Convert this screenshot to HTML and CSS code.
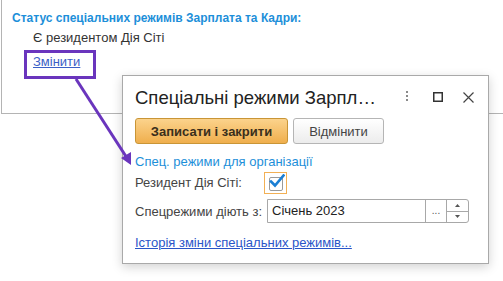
FILE: index.html
```html
<!DOCTYPE html>
<html lang="uk">
<head>
<meta charset="utf-8">
<link rel="stylesheet" href="styles.css">
</head>
<body>
<div class="page">
  <div class="panel">
    <div class="status-title">Статус спеціальних режимів Зарплата та Кадри:</div>
    <div class="status-value">Є резидентом Дія Сіті</div>
    <a class="change-link">Змінити</a>
  </div>

  <div class="dialog">
    <div class="dlg-head">
      <div class="dlg-title">Спеціальні режими Зарпл…</div>
      <div class="dlg-icons">
        <svg class="ic-dots" width="4" height="12" viewBox="0 0 4 12"><rect x="1" y="0" width="2" height="2" fill="#8a8a8a"/><rect x="1" y="4" width="2" height="2" fill="#8a8a8a"/><rect x="1" y="8" width="2" height="2" fill="#8a8a8a"/></svg>
        <svg class="ic-max" width="10" height="10" viewBox="0 0 10 10"><rect x="0.75" y="0.75" width="8.5" height="8.5" fill="none" stroke="#333" stroke-width="1.5"/></svg>
        <svg class="ic-close" width="11" height="11" viewBox="0 0 11 11"><path d="M0.5 0.5 L10.5 10.5 M10.5 0.5 L0.5 10.5" stroke="#444" stroke-width="1.2" fill="none"/></svg>
      </div>
    </div>
    <div class="dlg-buttons">
      <button class="btn btn-primary">Записати і закрити</button>
      <button class="btn btn-default">Відмінити</button>
    </div>
    <div class="dlg-body">
      <a class="org-link">Спец. режими для організації</a>
      <div class="row row-check">
        <span class="label">Резидент Дія Сіті:</span>
        <span class="check-focus"><span class="checkbox">
          <svg width="16" height="14" viewBox="0 0 16 14"><path d="M2 7.5 L6 11.5 L14.5 1.5" stroke="#1b7fd4" stroke-width="2.6" fill="none" stroke-linecap="square"/></svg>
        </span></span>
      </div>
      <div class="row row-date">
        <span class="label">Спецрежими діють з:</span>
        <div class="date-input">
          <span class="date-value">Січень 2023</span>
          <span class="date-pick">...</span>
          <span class="date-spin">
            <span class="spin-up"><svg width="5" height="3" viewBox="0 0 5 3"><path d="M0 3 L2.5 0 L5 3 Z" fill="#555"/></svg></span>
            <span class="spin-down"><svg width="5" height="3" viewBox="0 0 5 3"><path d="M0 0 L2.5 3 L5 0 Z" fill="#555"/></svg></span>
          </span>
        </div>
      </div>
      <a class="history-link">Історія зміни спеціальних режимів...</a>
    </div>
  </div>

  <svg class="annotation" width="503" height="281" viewBox="0 0 503 281">
    <rect x="25.5" y="51.5" width="69" height="26" fill="none" stroke="#6a35bd" stroke-width="3"/>
    <line x1="76" y1="79" x2="127" y2="158" stroke="#6a35bd" stroke-width="3"/>
    <path d="M131 165 L121 158 L131 152 Z" fill="#6a35bd"/>
  </svg>
</div>
</body>
</html>
```

FILE: styles.css
```css
html, body {
  margin: 0;
  padding: 0;
  background: #fff;
}
body {
  font-family: "Liberation Sans", Arial, sans-serif;
  color: #333;
  width: 503px;
  height: 281px;
  overflow: hidden;
}
.page {
  position: relative;
  width: 503px;
  height: 281px;
}
.panel {
  margin-left: 1px;
  height: 114px;
  border-left: 1px solid #b4b4b4;
  border-bottom: 1px solid #b4b4b4;
  box-sizing: border-box;
  padding: 11px 0 0 10px;
  display: flex;
  flex-direction: column;
  align-items: flex-start;
}
.status-title {
  font-size: 12px;
  font-weight: bold;
  color: #1d8fd9;
  line-height: 14px;
}
.status-value {
  font-size: 13px;
  line-height: 15px;
  margin: 5px 0 0 21px;
  color: #333;
}
.change-link {
  font-size: 13px;
  line-height: 15px;
  margin: 9px 0 0 21px;
  color: #3b5fc6;
  text-decoration: underline;
}
.dialog {
  position: absolute;
  left: 122px;
  top: 75px;
  width: 367px;
  height: 189px;
  box-sizing: border-box;
  background: #fff;
  border: 1px solid #a9a9a9;
  box-shadow: 0 3px 10px rgba(0,0,0,0.18);
  padding: 0 0 0 12px;
  display: flex;
  flex-direction: column;
}
.dlg-head {
  display: flex;
  align-items: center;
  height: 42px;
}
.dlg-title {
  font-size: 18.5px;
  color: #222;
  flex: 1;
  white-space: nowrap;
  padding-top: 2px;
}
.dlg-icons {
  display: flex;
  align-items: center;
  padding-right: 14px;
}
.ic-dots { margin-right: 24px; }
.ic-max { margin-right: 20px; }
.dlg-buttons {
  display: flex;
  gap: 5px;
  height: 26px;
}
.btn {
  font-family: "Liberation Sans", Arial, sans-serif;
  font-size: 13px;
  border-radius: 3px;
  padding: 0;
  height: 26px;
  box-sizing: border-box;
  color: #333;
}
.btn-primary {
  width: 153px;
  font-weight: bold;
  background: linear-gradient(#fbd38c, #efaf4d);
  border: 1px solid #c99536;
  color: #3a2f1c;
}
.btn-default {
  width: 91px;
  background: linear-gradient(#ffffff, #ececec);
  border: 1px solid #b5b5b5;
  color: #444;
}
.dlg-body {
  display: flex;
  flex-direction: column;
  align-items: flex-start;
  padding-top: 10px;
}
.org-link {
  font-size: 13px;
  line-height: 16px;
  color: #1d8fd9;
}
.row {
  display: flex;
  align-items: center;
}
.label {
  font-size: 13px;
  color: #444;
}
.row-check {
  margin-top: 1px;
  height: 23px;
}
.row-check .label { width: 129px; }
.check-focus {
  width: 23px;
  height: 22px;
  box-sizing: border-box;
  border: 1px solid #f2b055;
  display: flex;
  align-items: center;
  justify-content: center;
}
.checkbox {
  position: relative;
  width: 14px;
  height: 14px;
  box-sizing: border-box;
  border: 1px solid #9a9a9a;
  border-radius: 2px;
  background: #fff;
  margin-top: 2px;
}
.checkbox svg {
  position: absolute;
  left: -1px;
  top: -4px;
}
.row-date {
  margin-top: 5px;
}
.row-date .label { width: 132px; }
.date-input {
  display: flex;
  width: 202px;
  height: 24px;
  box-sizing: border-box;
  border: 1px solid #a8a8a8;
  border-radius: 0 3px 3px 0;
}
.date-value {
  flex: 1;
  font-size: 13px;
  color: #222;
  padding-left: 4px;
  line-height: 22px;
}
.date-pick {
  width: 20px;
  border-left: 1px solid #a8a8a8;
  font-size: 10px;
  color: #555;
  text-align: center;
  line-height: 22px;
}
.date-spin {
  width: 21px;
  border-left: 1px solid #a8a8a8;
  display: flex;
  flex-direction: column;
}
.spin-up, .spin-down {
  flex: 1;
  display: flex;
  align-items: center;
  justify-content: center;
}
.spin-up { border-bottom: 1px solid #a8a8a8; }
.history-link {
  margin-top: 12px;
  font-size: 13px;
  color: #2a55c8;
  text-decoration: underline;
}
.annotation {
  position: absolute;
  left: 0;
  top: 0;
  pointer-events: none;
}
```
